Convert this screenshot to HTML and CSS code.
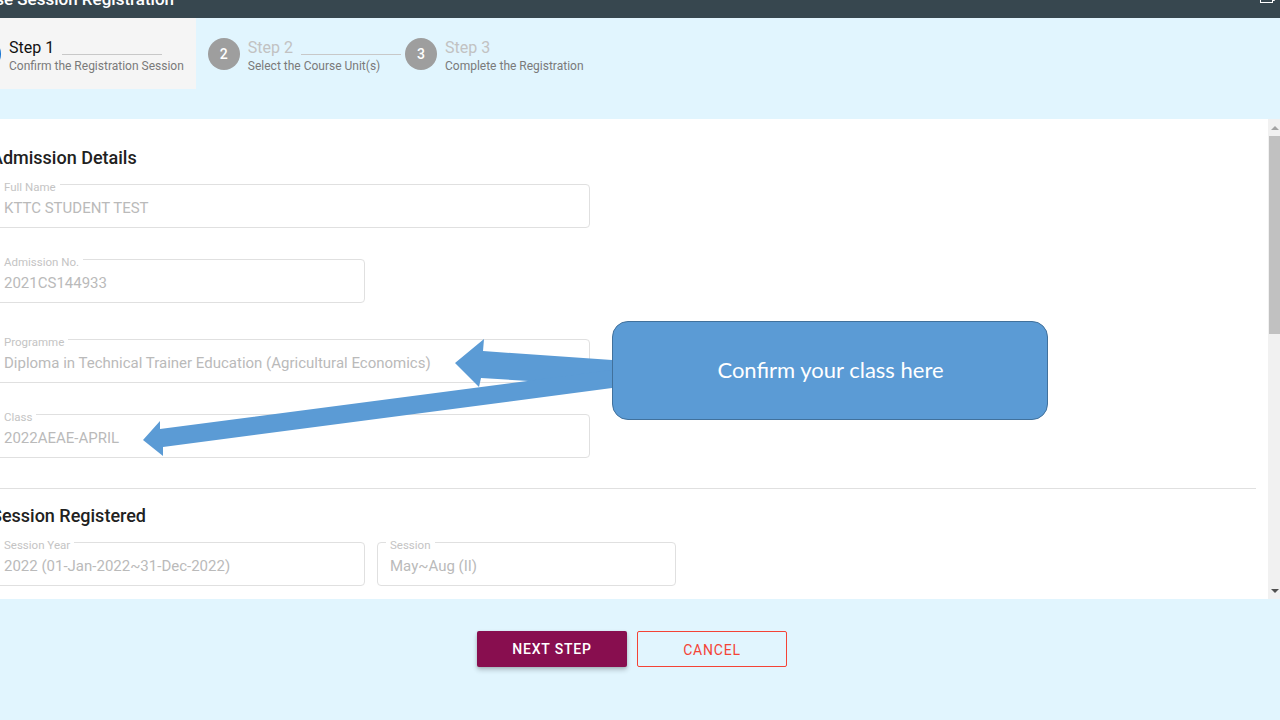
FILE: index.html
```html
<!DOCTYPE html>
<html lang="en">
<head>
<meta charset="utf-8">
<title>Course Session Registration</title>
<link rel="stylesheet" href="styles.css">
</head>
<body>
<div class="app">
  <header class="topbar">
    <div class="topbar-title">Course Session Registration</div>
    <svg class="topbar-icon" width="16" height="16" viewBox="0 0 16 16" aria-hidden="true">
      <rect x="1.5" y="4.5" width="12" height="10" fill="none" stroke="#fff" stroke-width="1"/>
      <path d="M3.5 4.5V2.5h12v10h-2" fill="none" stroke="#fff" stroke-width="1"/>
    </svg>
  </header>

  <nav class="stepper">
    <div class="step step-active">
      <div class="step-dot dot-active">1</div>
      <div class="step-text">
        <div class="step-head"><span class="step-title title-active">Step 1</span><span class="step-line"></span></div>
        <div class="step-sub">Confirm the Registration Session</div>
      </div>
    </div>
    <div class="step step-mid">
      <div class="step-dot">2</div>
      <div class="step-text">
        <div class="step-head"><span class="step-title">Step 2</span><span class="step-line"></span></div>
        <div class="step-sub">Select the Course Unit(s)</div>
      </div>
    </div>
    <div class="step step-last">
      <div class="step-dot">3</div>
      <div class="step-text">
        <div class="step-head"><span class="step-title">Step 3</span></div>
        <div class="step-sub">Complete the Registration</div>
      </div>
    </div>
  </nav>

  <section class="panel">
    <div class="panel-body">
      <h2 class="section-title">Admission Details</h2>
      <div class="field w-full mb-31"><span class="field-label">Full Name</span><span class="field-value">KTTC STUDENT TEST</span></div>
      <div class="field w-half mb-36"><span class="field-label">Admission No.</span><span class="field-value">2021CS144933</span></div>
      <div class="field w-full mb-31"><span class="field-label">Programme</span><span class="field-value">Diploma in Technical Trainer Education (Agricultural Economics)</span></div>
      <div class="field w-full"><span class="field-label">Class</span><span class="field-value">2022AEAE-APRIL</span></div>
      <hr class="divider">
      <h2 class="section-title">Session Registered</h2>
      <div class="field-row">
        <div class="field w-half"><span class="field-label">Session Year</span><span class="field-value">2022 (01-Jan-2022~31-Dec-2022)</span></div>
        <div class="field w-session"><span class="field-label">Session</span><span class="field-value">May~Aug (II)</span></div>
      </div>
    </div>
    <div class="scrollbar">
      <div class="sb-btn"><span class="sb-up"></span></div>
      <div class="sb-track"><div class="sb-thumb"></div></div>
      <div class="sb-btn"><span class="sb-down"></span></div>
    </div>
  </section>

  <div class="actions">
    <button class="btn btn-primary">NEXT STEP</button>
    <button class="btn btn-outline">CANCEL</button>
  </div>

  <svg class="arrows" width="1280" height="720" viewBox="0 0 1280 720" aria-hidden="true">
    <polygon points="612,360 483,351 484,339 455,363 479,387 481,378 612,386" fill="#5b9bd5"/>
    <polygon points="612,370 160,429 160,421 143,440 163,456 163,447 612,388" fill="#5b9bd5"/>
  </svg>
  <div class="callout">Confirm your class here</div>
</div>
</body>
</html>
```
FILE: styles.css
```css
* { box-sizing: border-box; }

html, body {
  margin: 0;
  padding: 0;
}

body {
  width: 1280px;
  height: 720px;
  overflow: hidden;
  background: #e1f5fe;
  font-family: Roboto, "Liberation Sans", sans-serif;
}

.app {
  position: relative;
  width: 1280px;
  height: 720px;
  overflow: hidden;
}

/* top bar */
.topbar {
  height: 18px;
  background: #37474f;
  display: flex;
  justify-content: space-between;
  overflow: hidden;
}

.topbar-title {
  margin-top: -11px;
  margin-left: -41px;
  color: #fff;
  font-size: 17px;
  font-weight: 500;
  line-height: 20px;
  white-space: nowrap;
}

.topbar-icon {
  margin-top: -12px;
  margin-right: 5px;
}

/* stepper */
.stepper {
  display: flex;
  margin-left: -43px;
  height: 71px;
  margin-bottom: 30px;
}

.step {
  display: flex;
  align-items: center;
  gap: 8px;
  padding: 0 12px;
}

.step-mid { padding-right: 0; }
.step-last { padding-left: 4px; }

.step-active { background: #f5f5f5; }

.step-dot {
  width: 32px;
  height: 32px;
  border-radius: 50%;
  background: #9e9e9e;
  color: #fff;
  font-size: 14px;
  font-weight: 500;
  display: flex;
  align-items: center;
  justify-content: center;
  flex: none;
}

.dot-active { background: #1976d2; }

.step-text {
  padding-top: 5px;
  display: flex;
  flex-direction: column;
}

.step-head {
  display: flex;
  align-items: flex-end;
  gap: 8px;
  height: 20px;
}

.step-title {
  font-size: 16px;
  line-height: 20px;
  color: #c2c2c2;
}

.title-active { color: #111; }

.step-line {
  width: 100px;
  height: 1px;
  background: #c8c8c8;
  margin-bottom: 3px;
}

.step-sub {
  font-size: 12px;
  line-height: 16px;
  color: #7a7a7a;
  white-space: nowrap;
}

/* panel */
.panel {
  display: flex;
  height: 480px;
  margin-left: -21px;
  background: #fff;
}

.panel-body {
  flex: 1;
  padding: 27px 12px 0 12px;
  overflow: hidden;
}

.section-title {
  margin: 0 0 14px 0;
  font-size: 18px;
  line-height: 24px;
  font-weight: 500;
  color: #212121;
}

.field {
  position: relative;
  height: 44px;
  border: 1px solid #e0e0e0;
  border-radius: 4px;
  display: flex;
  align-items: center;
  padding: 3px 12px 0 12px;
}

.w-full { width: 599px; }
.w-half { width: 374px; }
.w-session { width: 299px; }

.mb-31 { margin-bottom: 31px; }
.mb-36 { margin-bottom: 36px; }

.field-label {
  position: absolute;
  top: -5px;
  left: 8px;
  padding: 0 4px;
  background: #fff;
  font-size: 11.5px;
  line-height: 14px;
  color: #c4c4c4;
}

.field-value {
  font-size: 15px;
  color: #bababa;
  white-space: nowrap;
}

.field-row {
  display: flex;
  gap: 12px;
}

.divider {
  border: 0;
  height: 1px;
  background: #e0e0e0;
  margin: 30px 0 15px 0;
}

/* fake scrollbar */
.scrollbar {
  width: 12px;
  flex: none;
  background: #f1f1f1;
  display: flex;
  flex-direction: column;
}

.sb-btn {
  height: 17px;
  display: flex;
  align-items: center;
  justify-content: center;
  flex: none;
}

.sb-up {
  width: 0;
  height: 0;
  border-left: 4px solid transparent;
  border-right: 4px solid transparent;
  border-bottom: 4px solid #a3a3a3;
  margin-left: 2px;
}

.sb-down {
  width: 0;
  height: 0;
  border-left: 4px solid transparent;
  border-right: 4px solid transparent;
  border-top: 4px solid #505050;
  margin-left: 2px;
}

.sb-track {
  flex: 1;
  padding: 0 0 0 1px;
}

.sb-thumb {
  height: 198px;
  background: #c1c1c1;
}

/* actions */
.actions {
  display: flex;
  justify-content: center;
  gap: 10px;
  margin-top: 32px;
  padding-right: 16px;
}

.btn {
  width: 150px;
  height: 36px;
  border-radius: 2px;
  font-family: Roboto, "Liberation Sans", sans-serif;
  font-size: 14px;
  letter-spacing: 0.8px;
  cursor: pointer;
}

.btn-primary {
  background: #880e4f;
  color: #fff;
  border: 0;
  font-weight: 500;
  box-shadow: 0 3px 5px rgba(0, 0, 0, 0.2), 0 1px 3px rgba(0, 0, 0, 0.12);
}

.btn-outline {
  background: transparent;
  color: #f44336;
  border: 1px solid #f44336;
  font-weight: 400;
  padding-top: 2px;
}

/* annotation overlay */
.arrows {
  position: absolute;
  left: 0;
  top: 0;
  pointer-events: none;
}

.callout {
  position: absolute;
  left: 612px;
  top: 321px;
  width: 436px;
  height: 99px;
  border: 1px solid #41719c;
  border-radius: 16px;
  background: #5b9bd5;
  color: #fff;
  font-family: Lato, "Open Sans", sans-serif;
  font-size: 22px;
  display: flex;
  align-items: center;
  justify-content: center;
  padding: 0 0 2px 1px;
}
```
